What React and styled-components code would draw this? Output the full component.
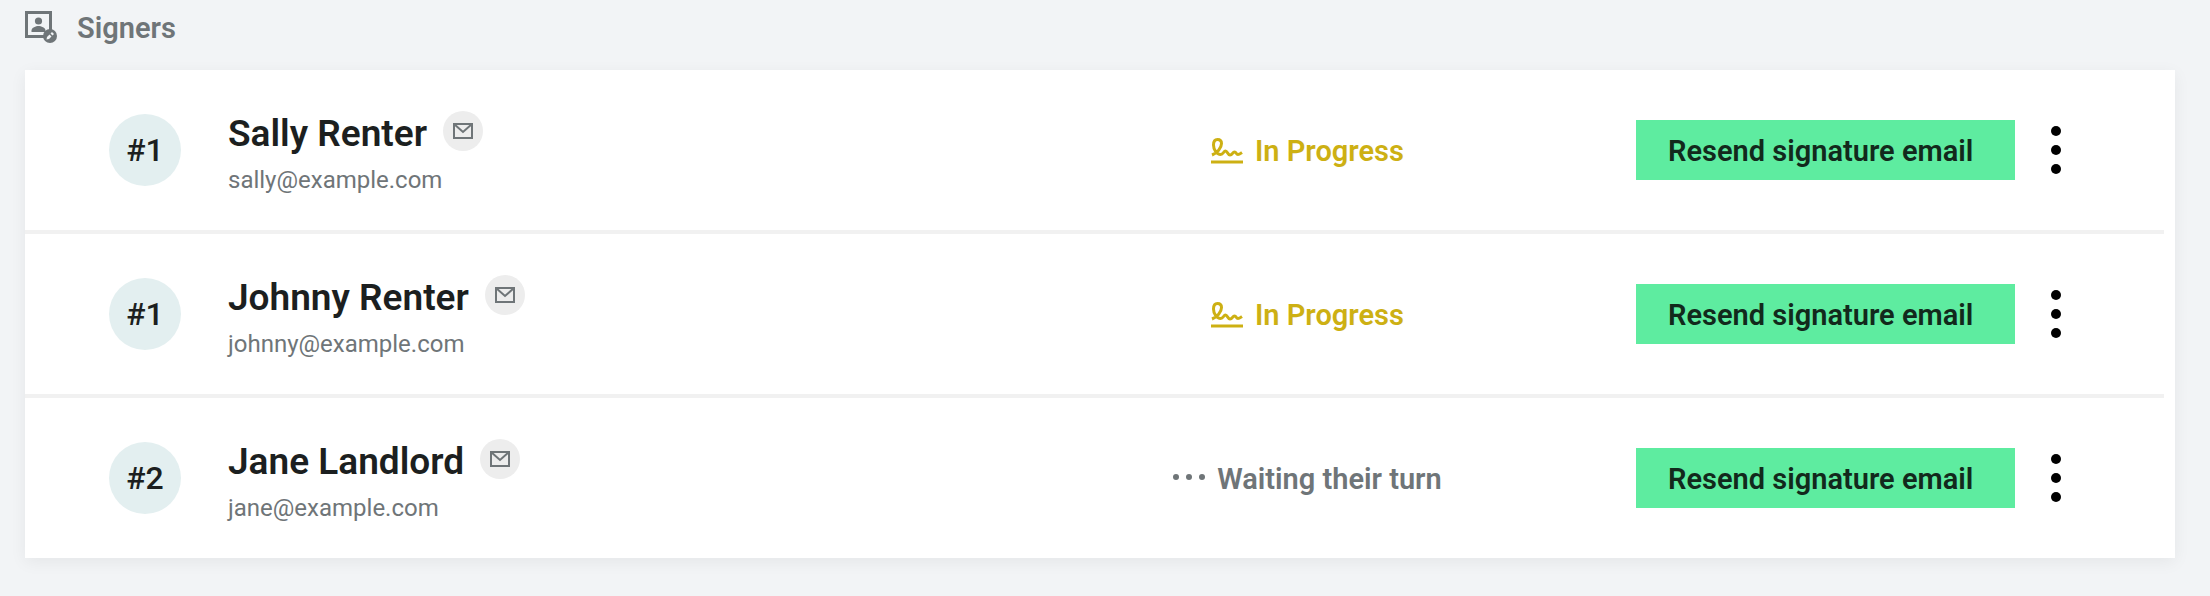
import React from 'react';
import styled, { createGlobalStyle } from 'styled-components';

const GlobalStyle = createGlobalStyle`
  *, *::before, *::after { box-sizing: border-box; }
  body {
    margin: 0;
    background: #f2f4f6;
    color: #1c1f20;
    font-family: Roboto, "Liberation Sans", sans-serif;
  }
`;

const Page = styled.main`
  padding: 11px 35px 38px 25px;
`;

const Heading = styled.h2`
  display: flex;
  align-items: flex-start;
  gap: 20px;
  margin: 0 0 25px;
  color: #6f7578;
  font-size: 29px;
  font-weight: 600;
  line-height: 34px;
`;

const Card = styled.ul`
  margin: 0;
  padding: 0;
  list-style: none;
  background: #fff;
  box-shadow: 0 4px 16px rgba(0, 0, 0, 0.06);
`;

const Row = styled.li`
  display: grid;
  grid-template-columns: auto 8fr 7fr auto;
  align-items: center;
  margin-right: 11px;
  padding: 39px 83px 39px 84px;

  &:not(:last-child) {
    border-bottom: 4px solid #f1f1f1;
  }
`;

const Order = styled.span`
  display: grid;
  place-items: center;
  width: 72px;
  height: 72px;
  margin-right: 47px;
  border-radius: 50%;
  background: #e3eff0;
  font-size: 32px;
  font-weight: 500;
`;

const Person = styled.div`
  display: grid;
  gap: 12px;
  min-width: 0;
  padding-top: 2px;
`;

const NameLine = styled.div`
  display: flex;
  align-items: flex-start;
  gap: 16px;
`;

const Name = styled.h3`
  margin: 0;
  font-size: 37px;
  font-weight: 600;
  line-height: 46px;
`;

const MailButton = styled.button`
  display: grid;
  place-items: center;
  width: 40px;
  height: 40px;
  padding: 0;
  border: 0;
  border-radius: 50%;
  background: #ededed;
  color: #6f7578;
  cursor: pointer;
`;

const Email = styled.span`
  color: #6f7578;
  font-size: 24px;
  line-height: 22px;
`;

const Status = styled.div`
  display: flex;
  align-items: center;
  justify-content: center;
  gap: 12px;
  padding-top: 2px;
  color: ${({ $active }) => ($active ? '#cdb013' : '#6f7578')};
  font-size: 29px;
  font-weight: 600;
  line-height: 32px;
  white-space: nowrap;
`;

const Actions = styled.div`
  display: flex;
  align-items: center;
  gap: 16px;
`;

const ResendButton = styled.button`
  width: 379px;
  height: 60px;
  padding: 2px 32px 0;
  border: 0;
  background: #5eeca0;
  color: #12291c;
  font: inherit;
  font-size: 29px;
  font-weight: 600;
  text-align: left;
  white-space: nowrap;
  cursor: pointer;
`;

const MenuButton = styled.button`
  display: grid;
  place-items: center;
  width: 50px;
  height: 60px;
  padding: 0;
  border: 0;
  background: none;
  color: #000;
  cursor: pointer;
`;

const SignersIcon = () => (
  <svg width="32" height="32" viewBox="0 0 32 32" aria-hidden="true">
    <rect x="1.5" y="1.5" width="24" height="24" fill="none" stroke="currentColor" strokeWidth="3" />
    <circle cx="13.5" cy="10" r="3.6" fill="currentColor" />
    <path d="M6.5 21v-1.5c0-3 4.5-4.500 7-4.500s7 1.500 7 4.500V21z" fill="currentColor" />
    <circle cx="25" cy="25" r="7" fill="currentColor" />
    <path d="M21.5 28.5l.5-2.500 2.500-2.500 2 2-2.500 2.500zM25.500 22.500l1.500-1.500 2 2-1.500 1.500z" fill="#f2f4f6" />
  </svg>
);

const MailIcon = () => (
  <svg width="20" height="16" viewBox="0 0 20 16" fill="none" stroke="currentColor" strokeWidth="2" aria-hidden="true">
    <path d="M1 1h18v14H1zM1 1l9 8 9-8" />
  </svg>
);

const SignatureIcon = () => (
  <svg width="32" height="26" viewBox="0 0 32 26" fill="none" stroke="currentColor" aria-hidden="true">
    <path
      d="M1 17C6 15 10.500 10 10.500 5.500 10.500 3 9 1.500 6.500 1.500 4 1.500 2.500 3.500 2.500 7c0 5 3.500 9.500 7 9.500 3 0 3-3.500 5-3.500s2 4 4.500 4 2.500-3 4.500-3 1.500 2.500 3.500 2.500c1.500 0 2.500-1 4-2"
      strokeWidth="3"
    />
    <path d="M0 24h32" strokeWidth="3" />
  </svg>
);

const WaitingIcon = () => (
  <svg width="32" height="12" viewBox="0 0 32 12" fill="currentColor" aria-hidden="true">
    <circle cx="3" cy="4" r="3" />
    <circle cx="16" cy="4" r="3" />
    <circle cx="29" cy="4" r="3" />
  </svg>
);

const MenuIcon = () => (
  <svg width="10" height="48" viewBox="0 0 10 48" fill="currentColor" aria-hidden="true">
    <circle cx="5" cy="5" r="5" />
    <circle cx="5" cy="24" r="5" />
    <circle cx="5" cy="43" r="5" />
  </svg>
);

const signers = [
  { order: 1, name: 'Sally Renter', email: 'sally@example.com', active: true },
  { order: 1, name: 'Johnny Renter', email: 'johnny@example.com', active: true },
  { order: 2, name: 'Jane Landlord', email: 'jane@example.com', active: false },
];

const SignerRow = ({ order, name, email, active }) => (
  <Row>
    <Order>#{order}</Order>
    <Person>
      <NameLine>
        <Name>{name}</Name>
        <MailButton type="button" aria-label={`Email ${name}`}>
          <MailIcon />
        </MailButton>
      </NameLine>
      <Email>{email}</Email>
    </Person>
    <Status $active={active}>
      {active ? <SignatureIcon /> : <WaitingIcon />}
      {active ? 'In Progress' : 'Waiting their turn'}
    </Status>
    <Actions>
      <ResendButton type="button">Resend signature email</ResendButton>
      <MenuButton type="button" aria-label={`More actions for ${name}`}>
        <MenuIcon />
      </MenuButton>
    </Actions>
  </Row>
);

export default function App() {
  return (
    <>
      <GlobalStyle />
      <Page>
        <Heading>
          <SignersIcon />
          Signers
        </Heading>
        <Card>
          {signers.map((signer) => (
            <SignerRow key={signer.email} {...signer} />
          ))}
        </Card>
      </Page>
    </>
  );
}
